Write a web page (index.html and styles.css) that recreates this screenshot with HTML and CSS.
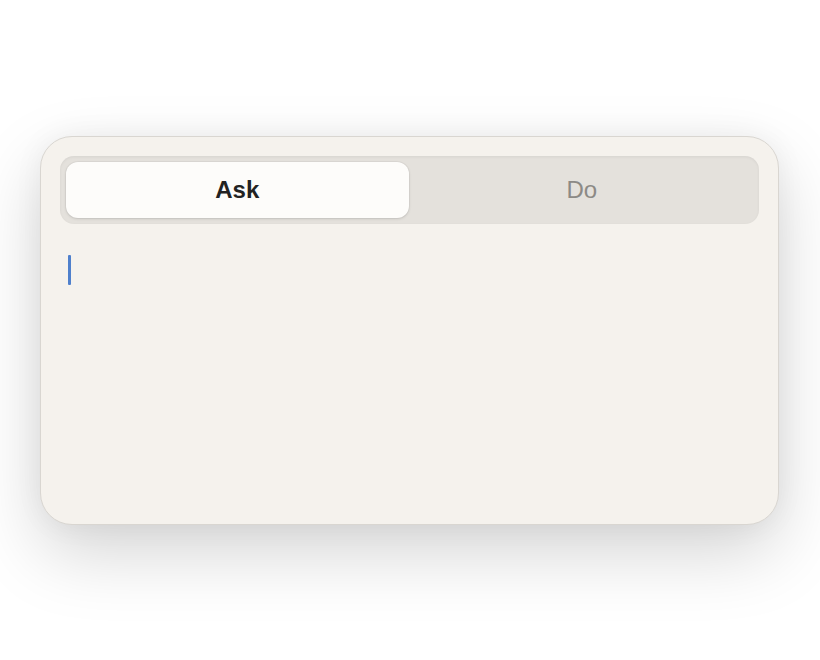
FILE: index.html
```html
<!DOCTYPE html>
<html lang="en">
<head>
	<meta charset="UTF-8">
	<title>Ask / Do</title>
	<link rel="stylesheet" href="styles.css">
</head>
<body>
	<div class="page">
		<div class="card">
			<div class="segment">
				<div class="seg-btn active">Ask</div>
				<div class="seg-btn">Do</div>
			</div>
			<div class="editor">
				<span class="caret"></span>
			</div>
		</div>
	</div>
</body>
</html>
```
FILE: styles.css
```css
html,body{margin: 0;padding: 0;background: #fff;font-family: "Liberation Sans", Arial, sans-serif;}
.page{min-height: 660px;padding: 136px 41px 135px 40px;box-sizing: border-box;}
.card{width: 739px;height: 389px;padding: 19px;box-sizing: border-box;background: #f5f2ed;border: 1px solid #d9d6d1;border-radius: 32px;box-shadow: 0 28px 70px rgba(0,0,0,.17), 0 0 30px rgba(0,0,0,.05);}
.segment{display: flex;gap: 2px;padding: 6px;height: 68px;box-sizing: border-box;background: #e4e1dc;border-radius: 14px;box-shadow: inset 0 1px 3px rgba(0,0,0,.06);}
.seg-btn{flex: 1;display: flex;align-items: center;justify-content: center;font-size: 24px;color: #8c8a86;border-radius: 12px;}
.seg-btn.active{background: #fdfcfa;color: #222;font-weight: bold;box-shadow: 0 1px 3px rgba(0,0,0,.12), 0 0 0 1px rgba(0,0,0,.03);}
.editor{padding: 31px 8px 0;}
.caret{display: block;width: 2.5px;height: 30px;background: #4f80cc;border-radius: 1px;}
```
